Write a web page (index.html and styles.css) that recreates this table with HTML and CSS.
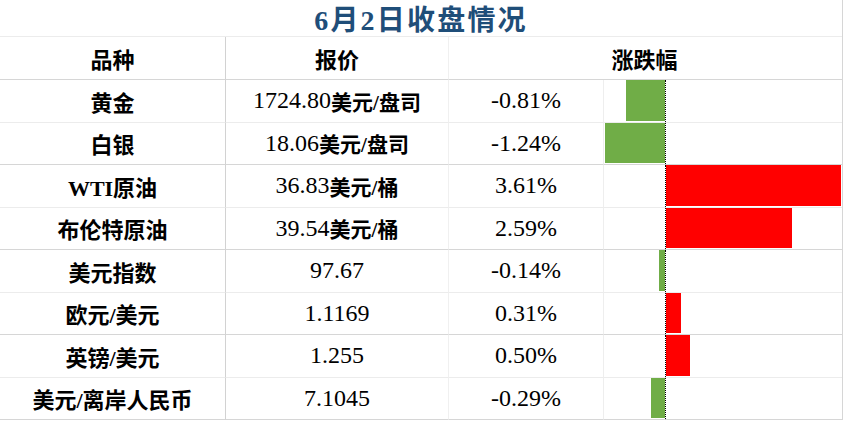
FILE: index.html
```html
<!DOCTYPE html>
<html lang="zh">
<head>
<meta charset="utf-8">
<title>6月2日收盘情况</title>
<link rel="stylesheet" href="styles.css">
</head>
<body>
<div class="sheet">
  <div class="title">6月2日收盘情况</div>

  <div class="cell head c1">品种</div>
  <div class="cell head c2">报价</div>
  <div class="cell head c34">涨跌幅</div>

  <div class="cell name c1 thin">黄金</div>
  <div class="cell c2 thin">1724.80<span class="cjk">美元/盘司</span></div>
  <div class="cell c3 thin">-0.81%</div>
  <div class="cell bars thin"><div class="neg"><div class="bar down" style="width:39px"></div></div><div class="pos"></div></div>

  <div class="cell name c1">白银</div>
  <div class="cell c2">18.06<span class="cjk">美元/盘司</span></div>
  <div class="cell c3">-1.24%</div>
  <div class="cell bars"><div class="neg"><div class="bar down" style="width:60px"></div></div><div class="pos"></div></div>

  <div class="cell name c1 thin">WTI原油</div>
  <div class="cell c2 thin">36.83<span class="cjk">美元/桶</span></div>
  <div class="cell c3 thin">3.61%</div>
  <div class="cell bars thin"><div class="neg"></div><div class="pos"><div class="bar up" style="width:175px"></div></div></div>

  <div class="cell name c1">布伦特原油</div>
  <div class="cell c2">39.54<span class="cjk">美元/桶</span></div>
  <div class="cell c3">2.59%</div>
  <div class="cell bars"><div class="neg"></div><div class="pos"><div class="bar up" style="width:126px"></div></div></div>

  <div class="cell name c1 thin">美元指数</div>
  <div class="cell c2 thin">97.67</div>
  <div class="cell c3 thin">-0.14%</div>
  <div class="cell bars thin"><div class="neg"><div class="bar down" style="width:6px"></div></div><div class="pos"></div></div>

  <div class="cell name c1">欧元/美元</div>
  <div class="cell c2">1.1169</div>
  <div class="cell c3">0.31%</div>
  <div class="cell bars"><div class="neg"></div><div class="pos"><div class="bar up" style="width:15px"></div></div></div>

  <div class="cell name c1 thin">英镑/美元</div>
  <div class="cell c2 thin">1.255</div>
  <div class="cell c3 thin">0.50%</div>
  <div class="cell bars thin"><div class="neg"></div><div class="pos"><div class="bar up" style="width:24px"></div></div></div>

  <div class="cell name c1">美元/离岸人民币</div>
  <div class="cell c2">7.1045</div>
  <div class="cell c3">-0.29%</div>
  <div class="cell bars"><div class="neg"><div class="bar down" style="width:14px"></div></div><div class="pos"></div></div>
</div>
</body>
</html>
```

FILE: styles.css
```css
html, body {
  margin: 0;
  padding: 0;
  background: #ffffff;
}

.sheet {
  display: grid;
  grid-template-columns: 226px 223px 155px 238px;
  grid-template-rows: 37px 43px repeat(8, 42.5px);
  font-family: "Liberation Serif", "Noto Sans CJK SC", serif;
  color: #000000;
  border-right: 1px solid #d6d6d6;
  box-sizing: border-box;
  width: 843px;
}

.title {
  grid-column: 1 / 5;
  display: flex;
  align-items: center;
  justify-content: center;
  font-size: 28px;
  font-weight: 700;
  color: #1f4e79;
  letter-spacing: 2.2px;
  border-bottom: 1px solid #ececec;
  padding-left: 0;
}

.cell {
  box-sizing: border-box;
  display: flex;
  align-items: center;
  justify-content: center;
  font-size: 24px;
  border-bottom: 1px solid #d6d6d6;
  white-space: nowrap;
}

.cell.thin {
  border-bottom-color: #ececec;
}

.head {
  font-weight: 700;
  border-bottom-color: #d6d6d6;
  font-size: 22px;
}

.c1 {
  border-right: 1px solid #d2d2d2;
}

.c2 {
  border-right: 1px solid #f0f0f0;
}

.c3 {
  border-right: 1px solid #eeeeee;
}

.c34 {
  grid-column: 3 / 5;
  padding-right: 2px;
}

.name {
  font-weight: 700;
  font-size: 22px;
}

.cjk {
  font-weight: 700;
  font-size: 21px;
}

.bars {
  align-items: stretch;
  justify-content: flex-start;
}

.neg {
  width: 61px;
  display: flex;
  justify-content: flex-end;
  padding: 0 0 1px;
}

.pos {
  flex: 1;
  display: flex;
  justify-content: flex-start;
  border-left: 1px dotted #000000;
  padding: 0 0 1px;
}

.bar {
  height: 100%;
}

.bar.down {
  background: #70ad47;
}

.bar.up {
  background: #ff0000;
}
```
